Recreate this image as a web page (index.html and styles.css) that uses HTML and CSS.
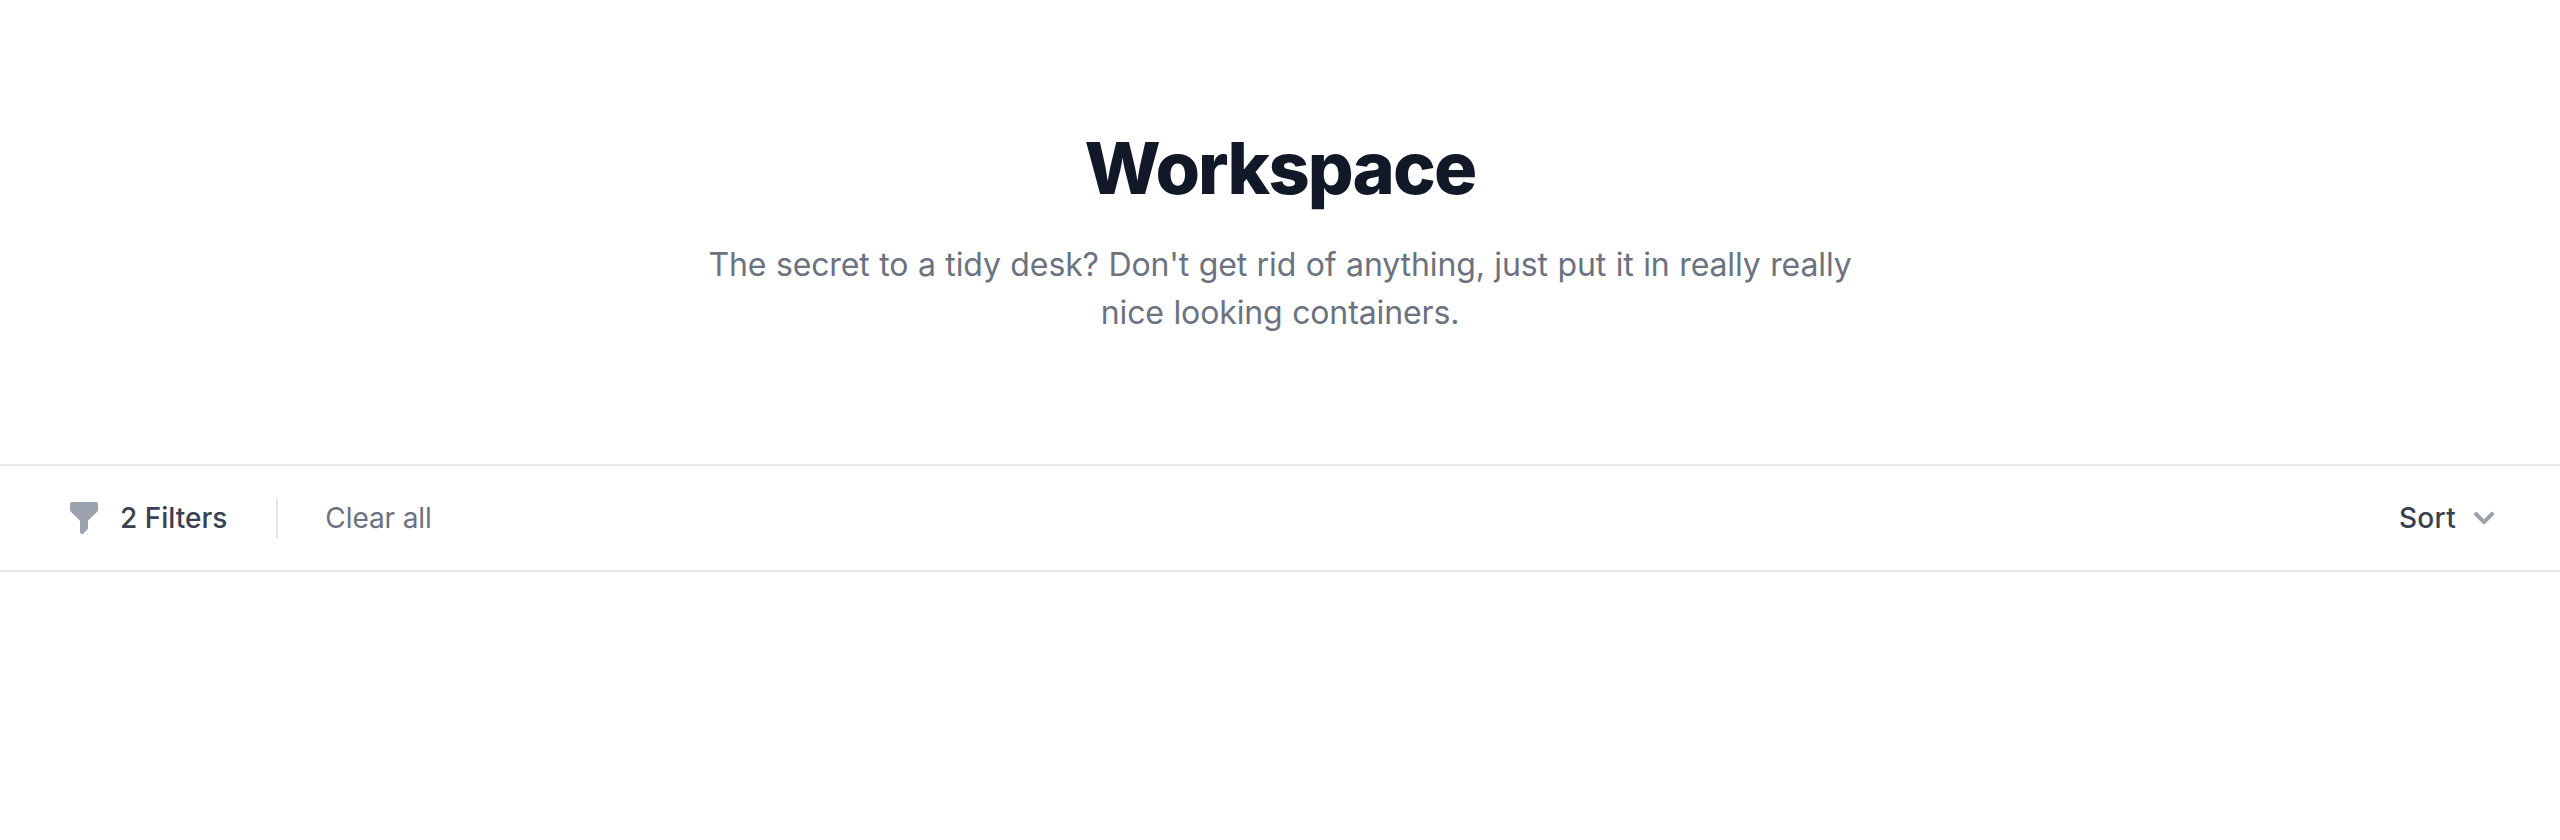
FILE: index.html
```html
<!DOCTYPE html>
<html lang="en">
<head>
<meta charset="utf-8">
<title>Workspace</title>
<link rel="stylesheet" href="styles.css">
</head>
<body>
<main>
  <header class="hero">
    <h1 class="title">Workspace</h1>
    <p class="intro">The secret to a tidy desk? Don't get rid of anything, just put it in really really nice looking containers.</p>
  </header>
  <section class="toolbar" aria-label="Filters">
    <div class="filters">
      <button class="filter-toggle" type="button">
        <svg class="filter-icon" viewBox="0 0 20 20" fill="currentColor" aria-hidden="true"><path fill-rule="evenodd" clip-rule="evenodd" d="M3 3a1 1 0 011-1h12a1 1 0 011 1v3a1 1 0 01-.293.707L12 11.414V15a1 1 0 01-.293.707l-2 2A1 1 0 018 17v-5.586L3.293 6.707A1 1 0 013 6V3z"/></svg>
        2 Filters
      </button>
      <button class="clear" type="button">Clear all</button>
    </div>
    <button class="sort" type="button">
      Sort
      <svg class="chevron" viewBox="0 0 20 20" fill="currentColor" aria-hidden="true"><path fill-rule="evenodd" clip-rule="evenodd" d="M5.293 7.293a1 1 0 011.414 0L10 10.586l3.293-3.293a1 1 0 111.414 1.414l-4 4a1 1 0 01-1.414 0l-4-4a1 1 0 010-1.414z"/></svg>
    </button>
  </section>
</main>
</body>
</html>
```
FILE: styles.css
```css
* { box-sizing: border-box; }
body {
  margin: 0;
  background: #fff;
  font-family: Inter, sans-serif;
}
h1, p { margin: 0; }
button {
  margin: 0;
  padding: 0;
  border: 0;
  background: none;
  color: inherit;
  font: inherit;
}
.hero {
  padding: 128px 64px 127px;
  text-align: center;
}
.title {
  color: #111827;
  font-size: 72px;
  line-height: 80px;
  font-weight: 800;
  letter-spacing: -0.026em;
}
.intro {
  max-width: 1152px;
  margin: 33px auto 0;
  color: #6b7280;
  font-size: 32px;
  line-height: 48px;
  letter-spacing: -0.12px;
  word-spacing: 0.7px;
}
.toolbar {
  display: flex;
  align-items: center;
  justify-content: space-between;
  padding: 32px 64px;
  border-top: 2px solid #e5e7eb;
  border-bottom: 2px solid #e5e7eb;
  font-size: 28px;
  line-height: 40px;
}
.filters { display: flex; }
.filter-toggle {
  display: flex;
  align-items: center;
  padding-right: 49px;
  color: #374151;
  font-weight: 500;
}
.filter-icon {
  width: 40px;
  height: 40px;
  margin-right: 16px;
  color: #9ca3af;
}
.clear {
  padding-left: 47px;
  border-left: 2px solid #e5e7eb;
  color: #6b7280;
  letter-spacing: -0.1px;
}
.sort {
  display: flex;
  align-items: center;
  color: #374151;
  font-weight: 500;
  letter-spacing: 0.3px;
}
.chevron {
  width: 40px;
  height: 40px;
  margin: 0 -8px 0 8px;
  color: #9ca3af;
}
```
